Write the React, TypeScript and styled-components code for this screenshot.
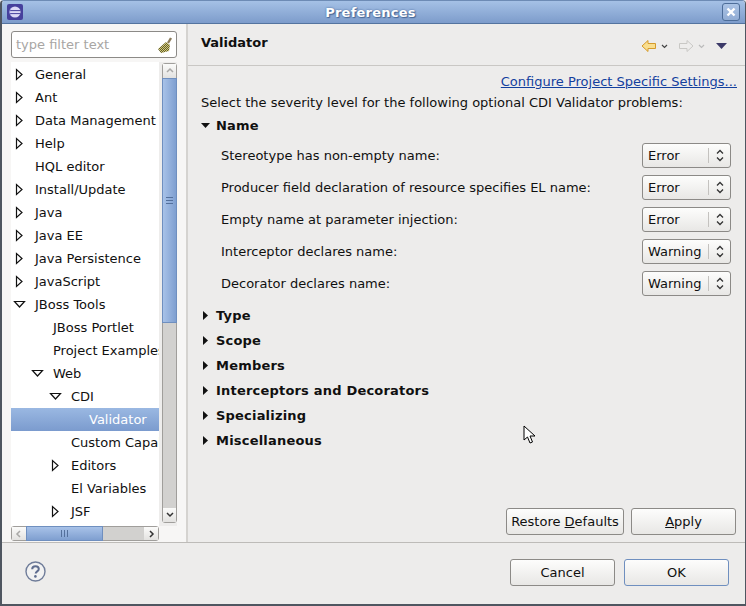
import React from "react";
import styled, { createGlobalStyle } from "styled-components";

const GlobalStyle = createGlobalStyle`
    html, body {
        margin: 0;
        padding: 0;
        background: #edeceb;
    }
    body {
        font-family: "DejaVu Sans", sans-serif;
        font-size: 13px;
        color: #101010;
    }
`;

const Window = styled.div`
    position: relative;
    width: 746px;
    height: 606px;
    box-sizing: border-box;
    border: 1px solid #4f5660;
    border-left-width: 2px;
    border-bottom-width: 2px;
    border-top-color: #6d8bb5;
    border-radius: 4px 4px 0 0;
    display: flex;
    flex-direction: column;
    overflow: hidden;
    background: #edeceb;
`;

const TitleBar = styled.div`
    flex: none;
    height: 22px;
    display: flex;
    align-items: center;
    padding: 0 5px 0 5px;
    background: linear-gradient(#a5c1e6, #7d9ccb);
    border-bottom: 1px solid #54749f;
`;

const Title = styled.div`
    flex: 1;
    text-align: center;
    padding-right: 4px;
    font-weight: bold;
    letter-spacing: 0.25px;
    color: #fff;
    text-shadow: 0 0 2px #3f6296, 1px 1px 1px #4a6894;
`;

const CloseBox = styled.div`
    width: 16px;
    height: 16px;
    border: 1px solid #4d6d99;
    border-radius: 3px;
    display: flex;
    align-items: center;
    justify-content: center;
    background: rgba(255, 255, 255, 0.12);
`;

const Body = styled.div`
    flex: none;
    height: 518px;
    display: flex;
    border-bottom: 1px solid #bdbbb8;
`;

const Sidebar = styled.div`
    flex: none;
    width: 186px;
    padding: 7px 0 0 9px;
    box-sizing: border-box;
    border-right: 2px solid #d5d3d0;
    display: flex;
    flex-direction: column;
    background: #f7f6f5;
`;

const FilterBox = styled.div`
    width: 166px;
    height: 27px;
    box-sizing: border-box;
    border: 1px solid #8c8a87;
    border-radius: 3px;
    background: #fff;
    display: flex;
    align-items: center;
    justify-content: space-between;
    padding: 0 3px 0 4px;
    margin-bottom: 4px;
    color: #a8a6a4;
`;

const TreeArea = styled.div`
    display: flex;
    width: 166px;
`;

const TreeList = styled.div`
    width: 148px;
    height: 464px;
    box-sizing: border-box;
    padding-top: 1px;
    overflow: hidden;
    background: #fff;
`;

const Gutter = styled.div`
    width: 18px;
    height: 464px;
    box-sizing: border-box;
    padding: 1px 0 0 3px;
    background: #eeedec;
`;

const Row = styled.div<{ $depth: number; $selected?: boolean }>`
    height: 23px;
    display: flex;
    align-items: center;
    white-space: nowrap;
    padding-left: ${(p) => 24 + p.$depth * 18}px;
    position: relative;
    color: ${(p) => (p.$selected ? "#fff" : "#101010")};
    background: ${(p) => (p.$selected ? "linear-gradient(#9ab8e2, #7b9bce)" : "transparent")};
`;

const Twist = styled.span<{ $depth: number; $open: boolean }>`
    position: absolute;
    left: ${(p) => (p.$open ? 2 : 4) + p.$depth * 18}px;
    top: ${(p) => (p.$open ? 7 : 5)}px;
    line-height: 0;
`;

const VScroll = styled.div`
    width: 15px;
    height: 460px;
    box-sizing: border-box;
    border: 1px solid #a09e9b;
    border-radius: 3px;
    background: #d2d1cf;
    display: flex;
    flex-direction: column;
`;

const ScrollArrow = styled.div`
    flex: none;
    width: 13px;
    height: 14px;
    background: linear-gradient(#fbfbfa, #e3e2e0);
    display: flex;
    align-items: center;
    justify-content: center;
`;

const VThumb = styled.div`
    flex: none;
    height: 245px;
    box-sizing: border-box;
    border: 1px solid #6f8fbf;
    margin: 0 -1px;
    background: linear-gradient(90deg, #a8c2e8, #7f9fd0);
    display: flex;
    align-items: center;
    justify-content: center;
`;

const Track = styled.div`
    flex: 1;
`;

const HScroll = styled.div`
    width: 148px;
    height: 15px;
    box-sizing: border-box;
    border: 1px solid #a09e9b;
    border-radius: 3px;
    background: #d2d1cf;
    display: flex;
    align-items: stretch;
`;

const HArrow = styled.div`
    flex: none;
    width: 14px;
    background: linear-gradient(#fbfbfa, #e3e2e0);
    display: flex;
    align-items: center;
    justify-content: center;
`;

const HThumb = styled.div`
    flex: none;
    width: 77px;
    margin: -1px 0;
    box-sizing: border-box;
    border: 1px solid #6f8fbf;
    background: linear-gradient(#a8c2e8, #7f9fd0);
    display: flex;
    align-items: center;
    justify-content: center;
`;

const Grip = styled.span`
    width: 8px;
    height: 7px;
    background: repeating-linear-gradient(90deg, #54709c 0 1px, transparent 1px 3px);
`;

const GripH = styled.span`
    width: 7px;
    height: 7px;
    background: repeating-linear-gradient(#54709c 0 1px, transparent 1px 3px);
`;

const Main = styled.div`
    flex: 1;
    min-width: 0;
    display: flex;
    flex-direction: column;
`;

const PageHeader = styled.div`
    flex: none;
    height: 42px;
    box-sizing: border-box;
    display: flex;
    justify-content: space-between;
    align-items: flex-start;
    padding: 11px 18px 0 13px;
    border-bottom: 1px solid #c9c7c4;
`;

const PageTitle = styled.div`
    font-weight: bold;
`;

const HeaderTools = styled.div`
    display: flex;
    align-items: center;
    margin-top: 4px;
    gap: 10px;
`;

const ToolGroup = styled.div`
    display: flex;
    align-items: center;
    gap: 4px;
`;

const MenuButton = styled.div`
    margin-left: 1px;
    line-height: 0;
`;

const Content = styled.div`
    flex: 1;
    display: flex;
    flex-direction: column;
    padding: 0 8px 7px 13px;
`;

const LinkRow = styled.div`
    display: flex;
    justify-content: flex-end;
    height: 27px;
    box-sizing: border-box;
    padding-top: 4px;
    align-items: center;
`;

const Link = styled.a`
    color: #13409e;
    text-decoration: underline;
`;

const Intro = styled.div`
    height: 20px;
    line-height: 20px;
`;

const SectionHead = styled.div`
    height: 25px;
    display: flex;
    align-items: center;
    gap: 6px;
    font-weight: bold;
    letter-spacing: 0.2px;
`;

const Caret = styled.span`
    width: 9px;
    display: flex;
    justify-content: center;
    line-height: 0;
`;

const Fields = styled.div`
    padding: 1px 6px 4px 20px;
`;

const Field = styled.div`
    height: 32px;
    display: flex;
    align-items: center;
    justify-content: space-between;
`;

const Combo = styled.div`
    width: 89px;
    height: 25px;
    box-sizing: border-box;
    border: 1px solid #8c8a87;
    border-radius: 3px;
    background: linear-gradient(#fdfdfc, #e8e7e5);
    display: flex;
    align-items: center;
    padding-left: 5px;
`;

const ComboText = styled.span`
    flex: 1;
`;

const ComboArrows = styled.span`
    flex: none;
    width: 21px;
    height: 15px;
    border-left: 1px solid #c4c2bf;
    display: flex;
    align-items: center;
    justify-content: center;
`;

const PageActions = styled.div`
    margin-top: auto;
    padding-right: 1px;
    display: flex;
    justify-content: flex-end;
    gap: 7px;
`;

const Button = styled.button<{ $width: number; $default?: boolean }>`
    width: ${(p) => p.$width}px;
    height: 27px;
    padding: 0;
    font: inherit;
    color: #101010;
    border: 1px solid ${(p) => (p.$default ? "#6f8fbf" : "#8c8a87")};
    border-radius: 3px;
    background: linear-gradient(#fdfdfc, #e8e7e5);
`;

const Footer = styled.div`
    flex: 1;
    display: flex;
    align-items: flex-start;
    justify-content: space-between;
    padding: 16px 16px 0 23px;
`;

const HelpIcon = styled.div`
    margin-top: 2px;
    line-height: 0;
`;

const FooterButtons = styled.div`
    display: flex;
    gap: 9px;
`;

const Cursor = styled.div`
    position: absolute;
    left: 521px;
    top: 424px;
    line-height: 0;
`;

type TreeItem = { label: string; depth: number; twist?: "open" | "closed"; selected?: boolean };

const treeItems: TreeItem[] = [
    { label: "General", depth: 0, twist: "closed" },
    { label: "Ant", depth: 0, twist: "closed" },
    { label: "Data Management", depth: 0, twist: "closed" },
    { label: "Help", depth: 0, twist: "closed" },
    { label: "HQL editor", depth: 0 },
    { label: "Install/Update", depth: 0, twist: "closed" },
    { label: "Java", depth: 0, twist: "closed" },
    { label: "Java EE", depth: 0, twist: "closed" },
    { label: "Java Persistence", depth: 0, twist: "closed" },
    { label: "JavaScript", depth: 0, twist: "closed" },
    { label: "JBoss Tools", depth: 0, twist: "open" },
    { label: "JBoss Portlet", depth: 1 },
    { label: "Project Examples", depth: 1 },
    { label: "Web", depth: 1, twist: "open" },
    { label: "CDI", depth: 2, twist: "open" },
    { label: "Validator", depth: 3, selected: true },
    { label: "Custom Capabilities", depth: 2 },
    { label: "Editors", depth: 2, twist: "closed" },
    { label: "El Variables", depth: 2 },
    { label: "JSF", depth: 2, twist: "closed" },
];

const nameFields = [
    { label: "Stereotype has non-empty name:", value: "Error" },
    { label: "Producer field declaration of resource specifies EL name:", value: "Error" },
    { label: "Empty name at parameter injection:", value: "Error" },
    { label: "Interceptor declares name:", value: "Warning" },
    { label: "Decorator declares name:", value: "Warning" },
];

const closedSections = ["Type", "Scope", "Members", "Interceptors and Decorators", "Specializing", "Miscellaneous"];

const TwistIcon = ({ open }: { open: boolean }) =>
    open ? (
        <svg width="13" height="9" viewBox="0 0 13 9">
            <path d="M1.5 1.5h10L6.5 7z" fill="#fff" stroke="#111" strokeWidth="1.2" />
        </svg>
    ) : (
        <svg width="9" height="13" viewBox="0 0 9 13">
            <path d="M1.5 1.5v10L7 6.5z" fill="#fff" stroke="#111" strokeWidth="1.2" />
        </svg>
    );

const Chevron = ({ dir, color = "#333" }: { dir: "up" | "down" | "left" | "right"; color?: string }) => {
    const d = {
        up: "M2 6l3-3 3 3",
        down: "M2 3l3 3 3-3",
        left: "M6 2L3 5l3 3",
        right: "M4 2l3 3-3 3",
    }[dir];
    return (
        <svg width="10" height="10" viewBox="0 0 10 10">
            <path d={d} fill="none" stroke={color} strokeWidth="1.5" />
        </svg>
    );
};

const ComboIcon = () => (
    <svg width="10" height="15" viewBox="0 0 10 15">
        <path d="M2 5.5l3-3 3 3M2 9.5l3 3 3-3" fill="none" stroke="#333" strokeWidth="1.3" />
    </svg>
);

const EclipseIcon = () => (
    <svg width="16" height="16" viewBox="0 0 16 16">
        <rect x="0" y="0" width="16" height="16" rx="2" fill="#46409c" />
        <circle cx="8" cy="8" r="5.6" fill="#dcd9f6" />
        <path d="M2.4 6.6h11.2M2.4 9.6h11.2" stroke="#46409c" strokeWidth="1" />
        <path d="M5 3.3a5.6 5.6 0 0 0 0 9.4a6.5 6.5 0 0 1 0-9.4z" fill="#8f88d8" />
    </svg>
);

const BroomIcon = () => (
    <svg width="16" height="18" viewBox="0 0 16 18">
        <defs>
            <pattern id="broomCheck" width="2" height="2" patternUnits="userSpaceOnUse">
                <rect width="2" height="2" fill="#d8cf72" />
                <rect width="1" height="1" fill="#5f5a35" />
                <rect x="1" y="1" width="1" height="1" fill="#5f5a35" />
            </pattern>
        </defs>
        <path d="M9 6L1 13l3 4 8-2 1-6z" fill="url(#broomCheck)" />
        <path d="M11 7l3-5" stroke="#8a7a5a" strokeWidth="2.4" />
    </svg>
);

const BackArrow = () => (
    <svg width="16" height="14" viewBox="0 0 16 14">
        <path d="M1 7l6-5.5V4.5h7.5v5H7v3z" fill="#f9de8e" stroke="#d59b2c" strokeLinejoin="round" />
    </svg>
);

const ForwardArrow = () => (
    <svg width="16" height="14" viewBox="0 0 16 14">
        <path d="M15 7L9 1.5V4.5H1.5v5H9v3z" fill="#eeedec" stroke="#c9c8c5" strokeLinejoin="round" />
    </svg>
);

const SmallDown = ({ color }: { color: string }) => (
    <svg width="7" height="5" viewBox="0 0 7 5">
        <path d="M1 1l2.5 2.5L6 1" fill="none" stroke={color} strokeWidth="1.2" />
    </svg>
);

const MenuDrop = () => (
    <svg width="11" height="6" viewBox="0 0 11 6">
        <path d="M0 0h11L5.5 6z" fill="#3c3a68" />
    </svg>
);

const HelpGlyph = () => (
    <svg width="21" height="21" viewBox="0 0 21 21">
        <circle cx="10.5" cy="10.5" r="9.5" fill="#f2f2f2" stroke="#6f7c99" strokeWidth="1.4" />
        <path
            d="M7.2 8.2c0-2 1.5-3 3.3-3s3.3 1 3.3 2.8c0 2.4-3.1 2.4-3.1 4.6"
            fill="none"
            stroke="#5f6d8f"
            strokeWidth="2"
        />
        <circle cx="10.4" cy="15.4" r="1.3" fill="#5f6d8f" />
    </svg>
);

const CursorArrow = () => (
    <svg width="14" height="20" viewBox="0 0 14 20">
        <path d="M1 1v14l3.5-3 2.5 6 2.5-1-2.5-6H12z" fill="#fff" stroke="#000" strokeWidth="1" />
    </svg>
);

export default function App() {
    return (
        <>
            <GlobalStyle />
            <Window>
                <TitleBar>
                    <EclipseIcon />
                    <Title>Preferences</Title>
                    <CloseBox>
                        <svg width="12" height="12" viewBox="0 0 12 12">
                            <path d="M2.5 2.5l7 7M9.5 2.5l-7 7" stroke="#fff" strokeWidth="2.4" />
                        </svg>
                    </CloseBox>
                </TitleBar>
                <Body>
                    <Sidebar>
                        <FilterBox>
                            <span>type filter text</span>
                            <BroomIcon />
                        </FilterBox>
                        <TreeArea>
                            <TreeList>
                                {treeItems.map((item) => (
                                    <Row key={item.label} $depth={item.depth} $selected={item.selected}>
                                        {item.twist && (
                                            <Twist $depth={item.depth} $open={item.twist === "open"}>
                                                <TwistIcon open={item.twist === "open"} />
                                            </Twist>
                                        )}
                                        {item.label}
                                    </Row>
                                ))}
                            </TreeList>
                            <Gutter>
                                <VScroll>
                                    <ScrollArrow>
                                        <Chevron dir="up" color="#a9a8a6" />
                                    </ScrollArrow>
                                    <VThumb>
                                        <GripH />
                                    </VThumb>
                                    <Track />
                                    <ScrollArrow>
                                        <Chevron dir="down" />
                                    </ScrollArrow>
                                </VScroll>
                            </Gutter>
                        </TreeArea>
                        <HScroll>
                            <HArrow>
                                <Chevron dir="left" color="#a9a8a6" />
                            </HArrow>
                            <HThumb>
                                <Grip />
                            </HThumb>
                            <Track />
                            <HArrow>
                                <Chevron dir="right" />
                            </HArrow>
                        </HScroll>
                    </Sidebar>
                    <Main>
                        <PageHeader>
                            <PageTitle>Validator</PageTitle>
                            <HeaderTools>
                                <ToolGroup>
                                    <BackArrow />
                                    <SmallDown color="#444" />
                                </ToolGroup>
                                <ToolGroup>
                                    <ForwardArrow />
                                    <SmallDown color="#bbb" />
                                </ToolGroup>
                                <MenuButton>
                                    <MenuDrop />
                                </MenuButton>
                            </HeaderTools>
                        </PageHeader>
                        <Content>
                            <LinkRow>
                                <Link>Configure Project Specific Settings...</Link>
                            </LinkRow>
                            <Intro>Select the severity level for the following optional CDI Validator problems:</Intro>
                            <SectionHead>
                                <Caret>
                                    <svg width="9" height="5" viewBox="0 0 9 5">
                                        <path d="M0 0h9L4.5 5z" fill="#111" />
                                    </svg>
                                </Caret>
                                Name
                            </SectionHead>
                            <Fields>
                                {nameFields.map((field) => (
                                    <Field key={field.label}>
                                        <span>{field.label}</span>
                                        <Combo>
                                            <ComboText>{field.value}</ComboText>
                                            <ComboArrows>
                                                <ComboIcon />
                                            </ComboArrows>
                                        </Combo>
                                    </Field>
                                ))}
                            </Fields>
                            {closedSections.map((section) => (
                                <SectionHead key={section}>
                                    <Caret>
                                        <svg width="5" height="9" viewBox="0 0 5 9">
                                            <path d="M0 0v9l5-4.5z" fill="#111" />
                                        </svg>
                                    </Caret>
                                    {section}
                                </SectionHead>
                            ))}
                            <PageActions>
                                <Button $width={118}>
                                    Restore <u>D</u>efaults
                                </Button>
                                <Button $width={105}>
                                    <u>A</u>pply
                                </Button>
                            </PageActions>
                        </Content>
                    </Main>
                </Body>
                <Footer>
                    <HelpIcon>
                        <HelpGlyph />
                    </HelpIcon>
                    <FooterButtons>
                        <Button $width={105}>Cancel</Button>
                        <Button $width={105} $default>
                            OK
                        </Button>
                    </FooterButtons>
                </Footer>
                <Cursor>
                    <CursorArrow />
                </Cursor>
            </Window>
        </>
    );
}
